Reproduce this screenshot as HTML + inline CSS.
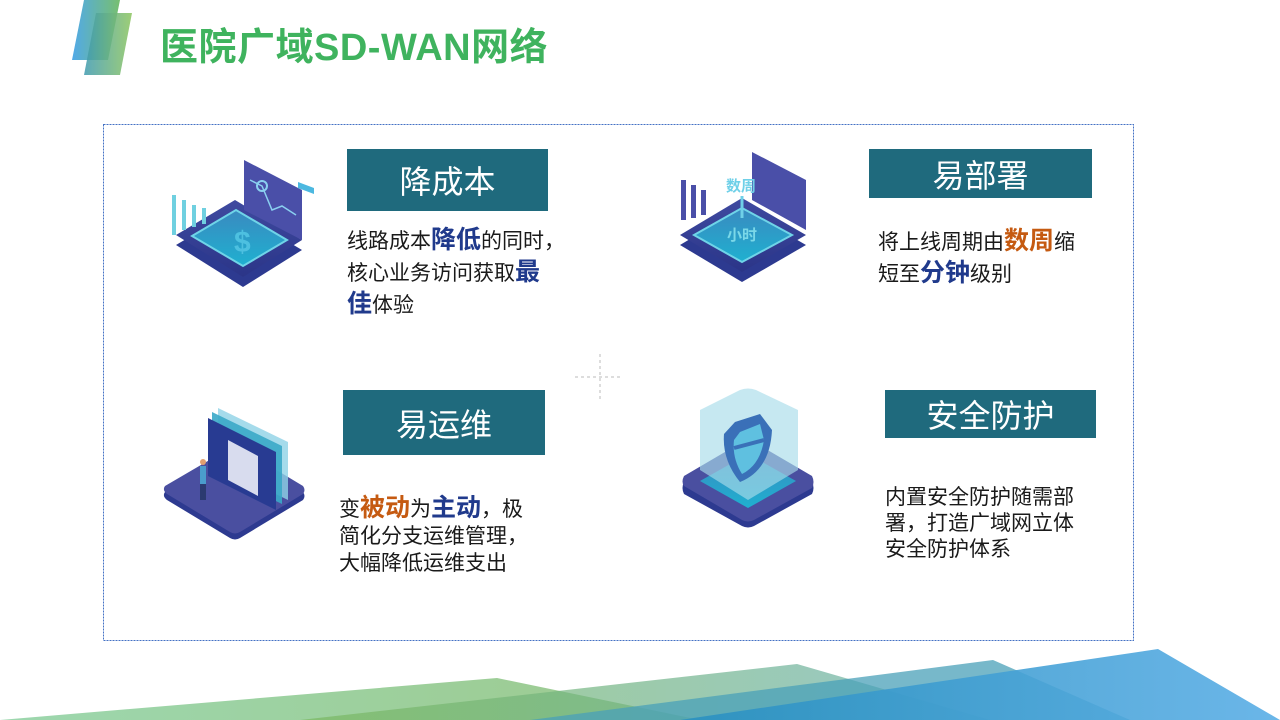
<!DOCTYPE html>
<html><head><meta charset="utf-8"><style>
*{margin:0;padding:0;box-sizing:border-box}
body{width:1280px;height:720px;background:#fff;position:relative;overflow:hidden;font-family:"Liberation Sans","Noto Sans CJK SC",sans-serif}
.abs{position:absolute}
.tb{position:absolute;background:#1f6a7d;color:#fff;font-size:32px;display:flex;align-items:center;justify-content:center}
.tx{position:absolute;font-size:21px;color:#1a1a1a;line-height:30px;white-space:nowrap}
.n{color:#203a8c;font-weight:bold;font-size:25px}
.o{color:#c55a11;font-weight:bold;font-size:25px}
</style></head><body>
<svg class="abs" style="left:0;top:0" width="1280" height="720">
<defs>
<linearGradient id="lg1" x1="0" x2="1"><stop offset="0" stop-color="#3ea0e6"/><stop offset="1" stop-color="#68b860"/></linearGradient>
<linearGradient id="lg2" x1="0" x2="1"><stop offset="0" stop-color="#3f9ab0"/><stop offset="1" stop-color="#8cc55e"/></linearGradient>
<linearGradient id="b1" x1="0" x2="1"><stop offset="0" stop-color="#8cd0a0"/><stop offset="1" stop-color="#8cc07a"/></linearGradient>
<linearGradient id="b2" x1="0" x2="1"><stop offset="0" stop-color="#7ab860"/><stop offset="1" stop-color="#6ab0b0"/></linearGradient>
<linearGradient id="b4" x1="0" x2="1"><stop offset="0" stop-color="#2a90c0"/><stop offset="1" stop-color="#5aaee6"/></linearGradient>
<linearGradient id="pl" x1="0" y1="0" x2="0" y2="1"><stop offset="0" stop-color="#3f4aa0"/><stop offset="1" stop-color="#2b3588"/></linearGradient>
<linearGradient id="sc" x1="0" y1="0" x2="0" y2="1"><stop offset="0" stop-color="#3a8ac0"/><stop offset="1" stop-color="#1fb0d0"/></linearGradient>
</defs>
<polygon points="84,0 120,0 108,60 72,60" fill="url(#lg1)" opacity="0.9"/>
<polygon points="96,13 132,13 120,75 84,75" fill="url(#lg2)" opacity="0.85"/>
<rect x="103.5" y="124.5" width="1030" height="516" fill="none" stroke="#4472c4" stroke-width="1" stroke-dasharray="2,1"/>
<line x1="600" y1="354" x2="600" y2="400" stroke="#bbb" stroke-dasharray="3,3"/>
<line x1="575" y1="377" x2="622" y2="377" stroke="#bbb" stroke-dasharray="3,3"/>
<polygon points="0,720 497,678 700,720" fill="url(#b1)" opacity="0.85"/>
<polygon points="300,720 797,664 990,720" fill="url(#b2)" opacity="0.7"/>
<polygon points="530,720 993,660 1130,720" fill="#4aa0b8" opacity="0.75"/>
<polygon points="680,720 1158,649 1280,720" fill="url(#b4)" opacity="0.9"/>
<g>
<polygon points="176,245 235,210 302,250 243,287" fill="#2d3a90"/>
<polygon points="176,235 235,200 302,240 243,277" fill="url(#pl)"/>
<polygon points="192,236 236,210 287,240 243,266" fill="url(#sc)" stroke="#6fd4e8" stroke-width="2"/>
<text x="234" y="252" font-size="30" font-weight="bold" fill="#4dc0e0" font-family="Liberation Sans">$</text>
<polygon points="244,160 302,190 302,240 244,210" fill="#4a4fa8"/>
<polyline points="250,180 262,186 272,210 282,206 296,215" fill="none" stroke="#8ad0f0" stroke-width="1.5"/>
<circle cx="262" cy="186" r="5" fill="none" stroke="#8ad0f0" stroke-width="2"/>
<rect x="172" y="195" width="4" height="40" fill="#6fd0e0"/><rect x="182" y="200" width="4" height="30" fill="#6fd0e0"/><rect x="192" y="205" width="4" height="22" fill="#6fd0e0"/><rect x="202" y="208" width="4" height="16" fill="#6fd0e0"/>
<polygon points="298,182 314,188 314,194 298,188" fill="#4cb8e0"/>
</g>
<g>
<polygon points="680,235 742,198 806,235 742,272" fill="#2d3a90" transform="translate(0,10)"/>
<polygon points="680,235 742,198 806,235 742,272" fill="url(#pl)"/>
<polygon points="694,235 742,208 792,235 742,262" fill="url(#sc)" stroke="#6fd4e8" stroke-width="2"/>
<polygon points="752,152 806,180 806,230 752,200" fill="#4a4fa8"/>
<rect x="681" y="180" width="5" height="40" fill="#4a4fa8"/><rect x="691" y="185" width="5" height="33" fill="#4a4fa8"/><rect x="701" y="190" width="5" height="25" fill="#4a4fa8"/>
<text x="726" y="191" font-size="15" font-weight="bold" fill="#6fd0e8">数周</text>
<text x="727" y="240" font-size="15" font-weight="bold" fill="#7ad8e8">小时</text>
<line x1="742" y1="196" x2="742" y2="218" stroke="#6fd0e8" stroke-width="3"/>
</g>
<g>
<path d="M165,488 L230,450 Q235,447 240,450 L303,488 Q306,492 303,496 L240,534 Q235,537 230,534 L167,496 Q162,492 165,488Z" fill="#2d3a90" transform="translate(0,4)"/>
<path d="M165,486 L230,448 Q235,445 240,448 L303,486 Q306,490 303,494 L240,532 Q235,535 230,532 L167,494 Q162,490 165,486Z" fill="#4a4fa0"/>
<polygon points="218,408 288,442 288,500 218,466" fill="#8fd2e6" opacity="0.8"/>
<polygon points="212,412 282,446 282,504 212,470" fill="#3aa8c8" opacity="0.9"/>
<polygon points="208,418 276,452 276,510 208,476" fill="#283b92"/>
<polygon points="228,440 258,456 258,496 228,480" fill="#d8dcee"/>
<rect x="200" y="466" width="6" height="18" fill="#4a9ccc"/><rect x="200" y="484" width="6" height="16" fill="#2b3a70"/><circle cx="203" cy="462" r="3" fill="#e0a070"/>
</g>
<g>
<path d="M684,478 L742,444 Q748,441 754,444 L812,478 Q815,484 812,490 L754,522 Q748,525 742,522 L684,490 Q681,484 684,478Z" fill="#2d3a90" transform="translate(0,4)"/>
<path d="M684,476 L742,442 Q748,439 754,442 L812,476 Q815,482 812,488 L754,520 Q748,523 742,520 L684,486 Q681,482 684,476Z" fill="#4a4fa0"/>
<polygon points="700,481 748,454 796,481 748,508" fill="url(#sc)"/>
<path d="M700,410 L740,390 Q748,387 756,390 L798,410 L798,470 L748,500 L700,470Z" fill="#a8dcea" opacity="0.65"/>
<path d="M735,422 L760,414 L772,430 Q770,470 740,482 Q722,460 724,434Z" fill="#3a70b8"/>
<path d="M740,432 L760,424 L764,440 Q760,465 742,474 Q732,458 734,440Z" fill="#5fc0e0"/>
<line x1="734" y1="448" x2="764" y2="440" stroke="#3a70b8" stroke-width="4"/>
</g>
</svg>
<div class="abs" style="left:160px;top:16px;font-size:38px;font-weight:bold;color:#3fb35e;letter-spacing:0.5px">医院广域SD-WAN网络</div>
<div class="tb" style="left:347px;top:149px;width:201px;height:62px">降成本</div>
<div class="tb" style="left:869px;top:149px;width:223px;height:49px">易部署</div>
<div class="tb" style="left:343px;top:390px;width:202px;height:65px">易运维</div>
<div class="tb" style="left:885px;top:390px;width:211px;height:48px">安全防护</div>
<div class="tx" style="left:347px;top:225px">线路成本<span class="n">降低</span>的同时，<br>核心业务访问获取<span class="n">最</span><br><span class="n">佳</span>体验</div>
<div class="tx" style="left:878px;top:226px">将上线周期由<span class="o">数周</span>缩<br>短至<span class="n">分钟</span>级别</div>
<div class="tx" style="left:339px;top:495px;line-height:27px">变<span class="o">被动</span>为<span class="n">主动</span>，极<br>简化分支运维管理，<br>大幅降低运维支出</div>
<div class="tx" style="left:885px;top:485px;line-height:26px">内置安全防护随需部<br>署，打造广域网立体<br>安全防护体系</div>
</body></html>
